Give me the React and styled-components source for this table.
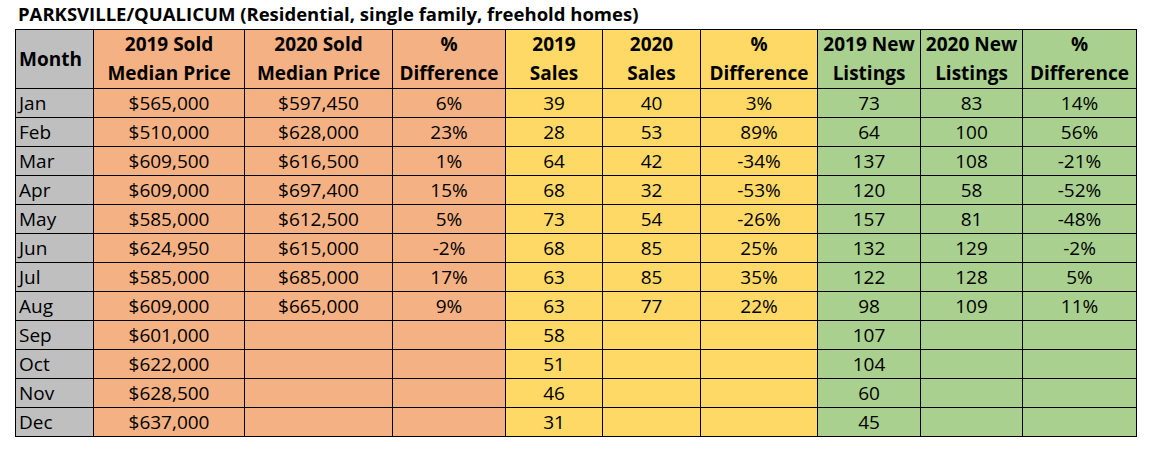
import React from "react";
import styled, { createGlobalStyle } from "styled-components";

const Global = createGlobalStyle`
  body {
    margin: 0;
    background: #ffffff;
    font-family: "Open Sans", "Liberation Sans", sans-serif;
    color: #000;
  }
`;

const Page = styled.div`
  padding: 0 0 0 15px;
  width: 1149px;
  height: 452px;
  box-sizing: border-box;
`;

const Title = styled.h1`
  margin: 0;
  height: 29px;
  padding: 3px 0 0 3px;
  box-sizing: border-box;
  font-size: 18.5px;
  line-height: 22px;
  font-weight: 700;
  color: #000;
  white-space: nowrap;
`;

const Table = styled.table`
  border-collapse: collapse;
  table-layout: fixed;
  width: 1122px;
  font-size: 19px;
`;

const palette = {
  month: "#BFBFBF",
  price: "#F4B183",
  sales: "#FFD966",
  listings: "#A9D08E",
};

const HeadCell = styled.th`
  background: ${(p) => palette[p.$group]};
  border: 1px solid #000;
  height: 57px;
  padding: 0 3px;
  font-weight: 700;
  line-height: 29px;
  text-align: ${(p) => (p.$group === "month" ? "left" : "center")};
  white-space: nowrap;
`;

const Cell = styled.td`
  background: ${(p) => palette[p.$group]};
  border: 1px solid #000;
  height: 28px;
  padding: 0 3px;
  line-height: 28px;
  text-align: ${(p) => (p.$group === "month" ? "left" : "center")};
  white-space: nowrap;
`;

const columns = [
  { w: 78, group: "month", head: ["Month"] },
  { w: 151, group: "price", head: ["2019 Sold", "Median Price"] },
  { w: 148, group: "price", head: ["2020 Sold", "Median Price"] },
  { w: 113, group: "price", head: ["%", "Difference"] },
  { w: 97, group: "sales", head: ["2019", "Sales"] },
  { w: 98, group: "sales", head: ["2020", "Sales"] },
  { w: 117, group: "sales", head: ["%", "Difference"] },
  { w: 103, group: "listings", head: ["2019 New", "Listings"] },
  { w: 102, group: "listings", head: ["2020 New", "Listings"] },
  { w: 114, group: "listings", head: ["%", "Difference"] },
];

const rows = [
  ["Jan", "$565,000", "$597,450", "6%", "39", "40", "3%", "73", "83", "14%"],
  ["Feb", "$510,000", "$628,000", "23%", "28", "53", "89%", "64", "100", "56%"],
  ["Mar", "$609,500", "$616,500", "1%", "64", "42", "-34%", "137", "108", "-21%"],
  ["Apr", "$609,000", "$697,400", "15%", "68", "32", "-53%", "120", "58", "-52%"],
  ["May", "$585,000", "$612,500", "5%", "73", "54", "-26%", "157", "81", "-48%"],
  ["Jun", "$624,950", "$615,000", "-2%", "68", "85", "25%", "132", "129", "-2%"],
  ["Jul", "$585,000", "$685,000", "17%", "63", "85", "35%", "122", "128", "5%"],
  ["Aug", "$609,000", "$665,000", "9%", "63", "77", "22%", "98", "109", "11%"],
  ["Sep", "$601,000", "", "", "58", "", "", "107", "", ""],
  ["Oct", "$622,000", "", "", "51", "", "", "104", "", ""],
  ["Nov", "$628,500", "", "", "46", "", "", "60", "", ""],
  ["Dec", "$637,000", "", "", "31", "", "", "45", "", ""],
];

export default function App() {
  return (
    <Page>
      <Global />
      <Title>PARKSVILLE/QUALICUM (Residential, single family, freehold homes)</Title>
      <Table>
        <colgroup>
          {columns.map((c, i) => (
            <col key={i} style={{ width: c.w }} />
          ))}
        </colgroup>
        <thead>
          <tr>
            {columns.map((c, i) => (
              <HeadCell key={i} $group={c.group}>
                {c.head.map((line, j) => (
                  <div key={j}>{line}</div>
                ))}
              </HeadCell>
            ))}
          </tr>
        </thead>
        <tbody>
          {rows.map((r) => (
            <tr key={r[0]}>
              {r.map((v, i) => (
                <Cell key={i} $group={columns[i].group}>
                  {v}
                </Cell>
              ))}
            </tr>
          ))}
        </tbody>
      </Table>
    </Page>
  );
}
